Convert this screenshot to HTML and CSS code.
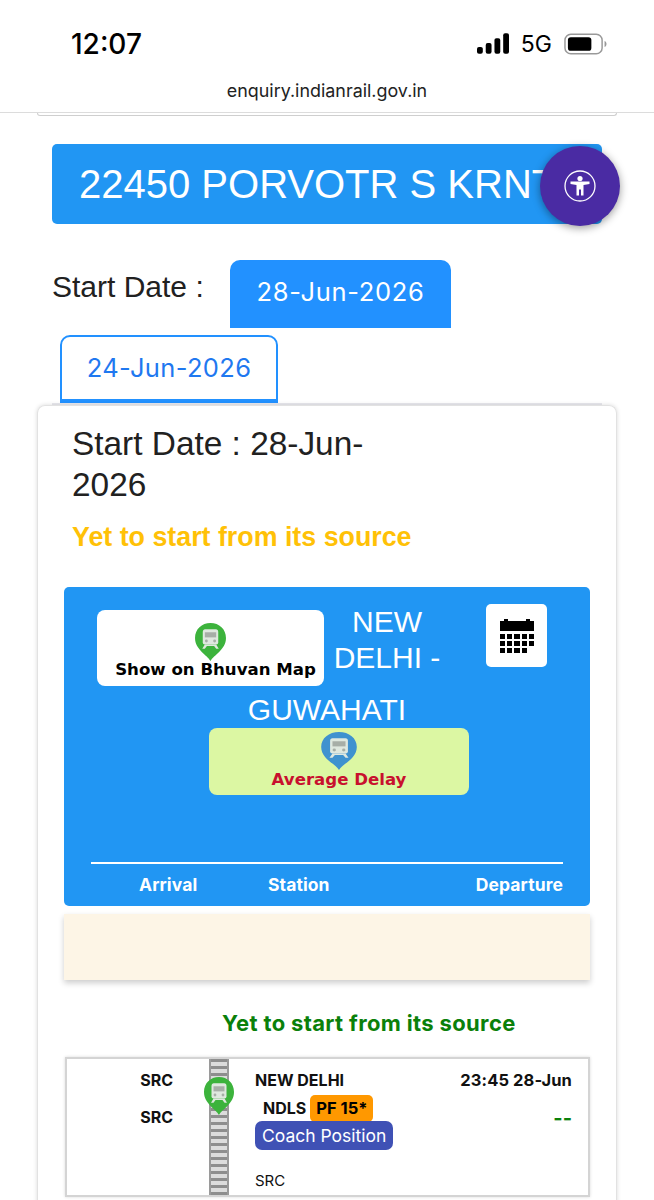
FILE: index.html
```html
<!DOCTYPE html>
<html lang="en">
<head>
    <meta charset="UTF-8">
    <meta name="viewport" content="width=device-width, initial-scale=1.0">
    <title>Train Running Status</title>
    <link rel="stylesheet" href="styles.css">
</head>
<body>
    <header class="status-bar">
        <div class="status-top">
            <span class="clock">12:07</span>
            <div class="status-icons">
                <svg class="signal" width="32" height="21" viewBox="0 0 33 21">
                    <rect x="0" y="14" width="6" height="7" rx="2" fill="#000"/>
                    <rect x="9" y="10" width="6" height="11" rx="2" fill="#000"/>
                    <rect x="18" y="5" width="6" height="16" rx="2" fill="#000"/>
                    <rect x="27" y="0" width="6" height="21" rx="2" fill="#000"/>
                </svg>
                <span class="network">5G</span>
                <svg class="battery" width="43" height="22" viewBox="0 0 44 22">
                    <rect x="1" y="1" width="38" height="20" rx="6" fill="none" stroke="#999" stroke-width="1.5"/>
                    <rect x="4" y="4" width="24" height="14" rx="3" fill="#000"/>
                    <path d="M41.500 8 C43 8.500 43.500 10 43.500 11 C43.500 12 43 13.500 41.500 14 Z" fill="#999"/>
                </svg>
            </div>
        </div>
        <div class="url">enquiry.indianrail.gov.in</div>
    </header>

    <div class="prev-card"></div>

    <div class="train-banner">22450 PORVOTR S KRNTI</div>

    <button class="access-btn" aria-label="Accessibility">
        <svg width="34" height="34" viewBox="0 0 34 34">
            <circle cx="17" cy="17" r="15" fill="none" stroke="#fff" stroke-width="1.300"/>
            <circle cx="17" cy="9.500" r="2.600" fill="#fff"/>
            <path d="M7.500 12.500 L26.500 12.500 L26.500 15 L20.500 16 L20.500 26.500 L18 26.500 L18 20.500 L16 20.500 L16 26.500 L13.500 26.500 L13.500 16 L7.500 15 Z" fill="#fff"/>
        </svg>
    </button>

    <div class="date-row">
        <span class="date-label">Start Date :</span>
        <div class="tab tab-active">28-Jun-2026</div>
    </div>
    <div class="tab tab-other">24-Jun-2026</div>
    <div class="tab-line"></div>

    <main class="card">
        <h2 class="start-date">Start Date : 28-Jun-2026</h2>
        <p class="yet-to-start">Yet to start from its source</p>

        <section class="route-panel">
            <div class="route-top">
                <button class="map-btn">
                    <svg class="pin" width="33" height="39" viewBox="0 0 32 38" preserveAspectRatio="none">
                        <use href="#pin-shape" fill="#3cb33c"/>
                    </svg>
                    <span>Show on Bhuvan Map</span>
                </button>
                <button class="cal-btn" aria-label="Calendar">
                    <svg width="34" height="35" viewBox="0 0 34 35">
                        <path d="M0 2 H4 V0 H8 V2 H26 V0 H30 V2 H34 V12 H0 Z" fill="#000"/>
                        <g fill="#000">
                            <rect x="0" y="15" width="5" height="5"/><rect x="7" y="15" width="5" height="5"/><rect x="14" y="15" width="6" height="5"/><rect x="22" y="15" width="5" height="5"/><rect x="29" y="15" width="5" height="5"/>
                            <rect x="0" y="22" width="5" height="5"/><rect x="7" y="22" width="5" height="5"/><rect x="14" y="22" width="6" height="5"/><rect x="22" y="22" width="5" height="5"/><rect x="29" y="22" width="5" height="5"/>
                            <rect x="0" y="29" width="5" height="5"/><rect x="7" y="29" width="5" height="5"/><rect x="14" y="29" width="6" height="5"/><rect x="22" y="29" width="5" height="5"/>
                        </g>
                    </svg>
                </button>
                <h3 class="route-name">NEW DELHI - <span class="route-end">GUWAHATI</span></h3>
            </div>

            <button class="delay-btn">
                <svg class="pin" width="38" height="39" viewBox="0 0 32 38" preserveAspectRatio="none">
                    <use href="#pin-shape" fill="#3f92cf"/>
                </svg>
                <span>Average Delay</span>
            </button>

            <div class="route-head">
                <span class="head-arrival">Arrival</span>
                <span class="head-station">Station</span>
                <span class="head-departure">Departure</span>
            </div>
        </section>

        <div class="notice"></div>

        <p class="source-msg">Yet to start from its source</p>

        <section class="station-row">
            <div class="arr-col">
                <div>SRC</div>
                <div class="arr-second">SRC</div>
            </div>
            <div class="track">
                <svg class="track-pin" width="32" height="39" viewBox="0 0 32 38" preserveAspectRatio="none">
                    <use href="#pin-shape" fill="#3cb33c"/>
                </svg>
            </div>
            <div class="stn-col">
                <div class="stn-name">NEW DELHI</div>
                <div class="stn-code-line">
                    <span class="stn-code">NDLS</span>
                    <span class="pf-badge">PF 15*</span>
                </div>
                <span class="coach-btn">Coach Position</span>
                <div class="stn-src">SRC</div>
            </div>
            <div class="dep-col">
                <div class="dep-time">23:45 28-Jun</div>
                <div class="dep-delay">--</div>
            </div>
        </section>
    </main>

    <svg width="0" height="0" class="defs">
        <defs>
            <g id="pin-shape">
                <path d="M16 38 C13 32 1 27 1 15.500 C1 7 7.500 1 16 1 C24.500 1 31 7 31 15.500 C31 27 19 32 16 38 Z"/>
                <path d="M10.500 7 H21.500 Q23.500 7 23.500 9.500 V20 Q23.500 22 21.500 22 H10.500 Q8.500 22 8.500 20 V9.500 Q8.500 7 10.500 7 Z" fill="#dfe8df"/>
                <rect x="10.500" y="10" width="11" height="5" fill="#000" fill-opacity="0.25"/>
                <circle cx="12" cy="18.500" r="1.400" fill="#000" fill-opacity="0.25"/>
                <circle cx="20" cy="18.500" r="1.400" fill="#000" fill-opacity="0.25"/>
                <path d="M10.500 22 L8 26 H10.500 L12.500 23.500 H19.500 L21.500 26 H24 L21.500 22 Z" fill="#dfe8df"/>
            </g>
        </defs>
    </svg>
</body>
</html>
```

FILE: styles.css
```css
html, body {
    margin: 0;
    padding: 0;
}

body {
    position: relative;
    height: 1200px;
    overflow: hidden;
    background-color: #ffffff;
    font-family: "Liberation Sans", Arial, sans-serif;
    color: #212121;
}

button {
    border: 0;
    padding: 0;
    cursor: pointer;
}

.defs {
    position: absolute;
}

/* phone status bar */
.status-bar {
    height: 113px;
    border-bottom: 1px solid #dcdcdc;
    box-sizing: border-box;
}

.status-top {
    display: flex;
    justify-content: space-between;
    align-items: center;
    height: 87px;
    padding: 0 47px 0 71px;
}

.clock {
    font-family: "Inter", sans-serif;
    font-size: 28px;
    font-weight: 500;
    color: #000;
}

.status-icons {
    display: flex;
    align-items: center;
}

.network {
    margin: 0 12px;
    font-family: "Inter", sans-serif;
    font-size: 23px;
    color: #000;
}

.url {
    margin-top: -7px;
    text-align: center;
    font-family: "Inter", sans-serif;
    font-size: 17.900px;
    color: #222;
}

.prev-card {
    height: 2px;
    margin: 0 37px;
    border: 1px solid #cfcfcf;
    border-top: 0;
    border-radius: 0 0 8px 8px;
}

/* train title */
.train-banner {
    height: 80px;
    margin: 28px 52px 0;
    padding-left: 27px;
    overflow: hidden;
    border-radius: 5px;
    background-color: #2196f3;
    color: #fff;
    font-size: 40px;
    line-height: 80px;
    white-space: nowrap;
}

.access-btn {
    position: absolute;
    left: 540px;
    top: 146px;
    width: 80px;
    height: 80px;
    display: flex;
    align-items: center;
    justify-content: center;
    border-radius: 50%;
    background-color: #4a2ba3;
    box-shadow: 0 2px 8px rgba(0, 0, 0, 0.4);
}

/* date tabs */
.date-row {
    display: flex;
    margin: 36px 0 0 52px;
}

.date-label {
    width: 178px;
    padding-top: 10px;
    font-size: 30px;
}

.tab {
    box-sizing: border-box;
    text-align: center;
    font-family: "Inter", sans-serif;
    font-size: 25.500px;
    letter-spacing: 0.7px;
    border-radius: 10px 10px 0 0;
}

.tab-active {
    width: 221px;
    height: 68px;
    line-height: 64px;
    background-color: #2291ff;
    color: #fff;
}

.tab-other {
    width: 218px;
    height: 69px;
    margin: 7px 0 0 60px;
    line-height: 61px;
    letter-spacing: 0.35px;
    border: 2px solid #2291ff;
    border-bottom: 5px solid #2291ff;
    color: #1f78f0;
}

.tab-line {
    height: 2px;
    margin: -1px 52px 0;
    background-color: #e9e9ee;
}

/* main card */
.card {
    margin: 0 37px;
    height: 800px;
    padding: 17px 26px 0;
    border: 1px solid #e2e2e2;
    border-bottom: 0;
    border-radius: 8px 8px 0 0;
    box-shadow: 0 0 4px rgba(0, 0, 0, 0.15);
}

.start-date {
    width: 300px;
    margin: 0 0 0 8px;
    font-size: 33.400px;
    font-weight: 400;
    line-height: 41px;
}

.yet-to-start {
    margin: 14px 0 0 8px;
    font-size: 26.800px;
    font-weight: 700;
    line-height: 36px;
    color: #ffc107;
}

/* blue route panel */
.route-panel {
    display: flex;
    flex-direction: column;
    height: 319px;
    box-sizing: border-box;
    margin: 32px 0 0 0;
    padding: 17px 27px 0;
    border-radius: 5px;
    background-color: #2196f3;
}

.route-top {
    padding: 0 6px;
    height: 124px;
}

.map-btn {
    float: left;
    display: flex;
    flex-direction: column;
    justify-content: flex-start;
    width: 227px;
    height: 76px;
    margin-top: 6px;
    padding-top: 12px;
    box-sizing: border-box;
    border-radius: 8px;
    background-color: #fff;
    font-family: "DejaVu Sans", sans-serif;
    font-size: 16.600px;
    font-weight: 700;
    color: #000;
    line-height: 20px;
}

.map-btn span {
    display: block;
    margin: -1px 0 0 10px;
    white-space: nowrap;
}

.map-btn .pin {
    display: block;
    margin-left: 97px;
}

.cal-btn {
    float: right;
    width: 61px;
    height: 63px;
    margin: 0 10px 0 36px;
    padding-top: 2px;
    box-sizing: border-box;
    border-radius: 5px;
    background-color: #fff;
    display: flex;
    align-items: center;
    justify-content: center;
}

.route-name {
    margin: 0;
    font-size: 30px;
    font-weight: 400;
    line-height: 36px;
    text-align: center;
    color: #fff;
}

.route-end {
    display: block;
    clear: left;
    padding-top: 6px;
}

.delay-btn {
    display: flex;
    flex-direction: column;
    justify-content: flex-start;
    align-items: center;
    width: 260px;
    height: 67px;
    margin-left: 118px;
    padding-top: 3px;
    box-sizing: border-box;
    border-radius: 8px;
    background-color: #dcf7a3;
    font-family: "DejaVu Sans", sans-serif;
    font-size: 16.600px;
    font-weight: 700;
    color: #c8102e;
    line-height: 20px;
}

.delay-btn .pin {
    display: block;
}

.delay-btn span {
    display: block;
}

.route-head {
    display: flex;
    height: 42px;
    margin-top: auto;
    border-top: 2px solid #fff;
    font-family: "Inter", sans-serif;
    font-size: 17.500px;
    font-weight: 700;
    letter-spacing: 0.1px;
    color: #fff;
    line-height: 42px;
}

.head-arrival {
    margin-left: 48px;
    width: 129px;
}

.head-station {
    flex: 1;
}

/* cream notice */
.notice {
    height: 66px;
    margin-top: 8px;
    background-color: #fdf5e6;
    box-shadow: 0 3px 6px rgba(0, 0, 0, 0.2);
}

.source-msg {
    margin: 28px 0 0 158px;
    font-family: "Inter", sans-serif;
    font-size: 22px;
    font-weight: 700;
    letter-spacing: 0.35px;
    line-height: 30px;
    color: #0a800a;
}

/* station row */
.station-row {
    display: flex;
    width: 525px;
    height: 140px;
    box-sizing: border-box;
    margin-top: 19px;
    margin-left: 1px;
    border: 2px solid #d4d4d4;
    box-shadow: 0 0 3px rgba(0, 0, 0, 0.15);
    font-family: "Inter", sans-serif;
    font-size: 16px;
    color: #111;
}

.arr-col {
    width: 106px;
    padding-top: 12px;
    text-align: right;
    font-weight: 700;
    line-height: 19px;
}

.arr-second {
    margin-top: 18px;
}

.track {
    position: relative;
    width: 16px;
    margin: 0 0 0 36px;
    border-left: 2px solid #9a9a9a;
    border-right: 2px solid #9a9a9a;
    background: repeating-linear-gradient(to bottom, #8e8e8e 0, #8e8e8e 3px, #dcdcdc 3px, #dcdcdc 7px);
}

.track-pin {
    position: absolute;
    left: -8px;
    top: 17px;
}

.stn-col {
    width: 200px;
    margin-left: 26px;
    padding-top: 12px;
    line-height: 19px;
}

.stn-name {
    font-weight: 700;
}

.stn-code-line {
    display: flex;
    align-items: center;
    height: 27px;
    margin-top: 5px;
    padding-left: 8px;
    font-weight: 700;
}

.pf-badge {
    margin-left: 4px;
    padding: 0 6px;
    height: 27px;
    line-height: 27px;
    border-radius: 5px;
    background-color: #ff9800;
    font-size: 16.500px;
    color: #000;
}

.coach-btn {
    display: inline-block;
    margin-top: -1px;
    padding: 0 7px;
    height: 29px;
    line-height: 29px;
    border-radius: 7px;
    background-color: #3f51b5;
    color: #fff;
    font-size: 17.500px;
    white-space: nowrap;
}

.stn-src {
    margin-top: 21px;
    font-size: 15px;
}

.dep-col {
    flex: 1;
    padding: 12px 16px 0 0;
    text-align: right;
    line-height: 19px;
}

.dep-time {
    font-size: 16.500px;
    font-weight: 700;
    letter-spacing: 0.1px;
    white-space: nowrap;
}

.dep-delay {
    margin-top: 19px;
    font-weight: 700;
    color: #0a800a;
    font-size: 20px;
}
```
